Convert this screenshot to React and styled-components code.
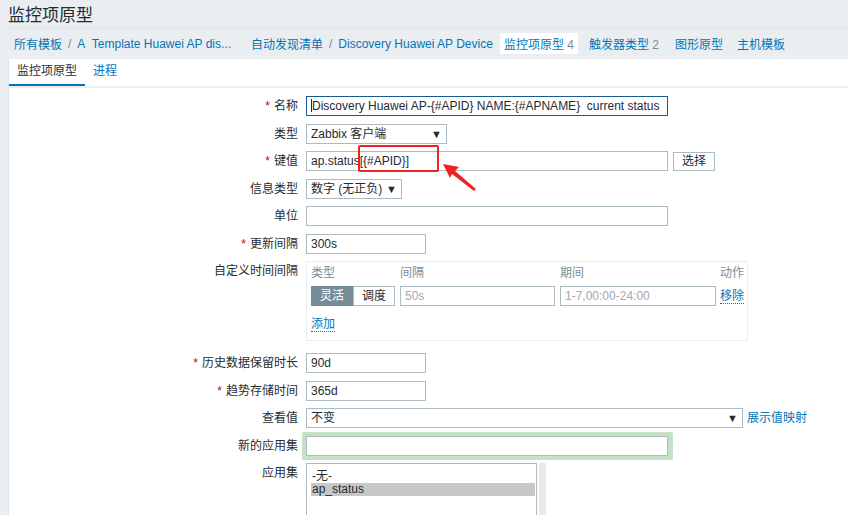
import styled, { createGlobalStyle } from 'styled-components'

const Global = createGlobalStyle`
  html, body { margin: 0; padding: 0; }
  body {
    background: #ebeef0;
    font-family: "Liberation Sans", Arial, "Noto Sans CJK SC", sans-serif;
    font-size: 12px;
    color: #1f2c33;
    overflow: hidden;
  }
`

const Page = styled.div`
  width: 848px;
  height: 515px;
  overflow: hidden;
`

const Header = styled.div`
  height: 27px;
  border-bottom: 1px solid #dfe4e7;
  margin-left: 8px;
  display: flex;
  align-items: center;
  h1 {
    margin: 0;
    font-size: 17px;
    font-weight: normal;
    color: #1f2c33;
    line-height: 27px;
    position: relative;
    top: 2px;
  }
`

const Crumbs = styled.div`
  display: flex;
  align-items: center;
  height: 31px;
  padding-left: 14px;
  white-space: nowrap;
`

const Crumb = styled.span`
  color: #0275b8;
  padding: ${p => (p.$active ? '2px 4px' : '2px 0')};
  background: ${p => (p.$active ? '#fff' : 'transparent')};
  margin-right: ${p => p.$gap || 0}px;
  em {
    font-style: normal;
    color: #768d99;
  }
`

const Sep = styled.span`
  color: #768d99;
  margin: 0 6px;
`

const Card = styled.div`
  background: #fff;
  margin-left: 8px;
  border-left: 1px solid #dfe4e7;
  height: 460px;
`

const Tabs = styled.div`
  display: flex;
  height: 27px;
  border-bottom: 2px solid #ebeef0;
`

const Tab = styled.div`
  padding: 0 8px;
  line-height: 25px;
  color: ${p => (p.$on ? '#1f2c33' : '#0275b8')};
  border-bottom: 2px solid ${p => (p.$on ? '#0275b8' : 'transparent')};
  margin-bottom: -2px;
  height: 25px;
  font-size: 12px;
`

const Form = styled.div`
  padding-top: 8px;
  display: flex;
  flex-direction: column;
  gap: 7.5px;
`

const Row = styled.div`
  display: flex;
  align-items: ${p => (p.$top ? 'flex-start' : 'center')};
  margin-top: ${p => p.$mt || 0}px;
  position: relative;
`

const Label = styled.div`
  width: 289px;
  text-align: right;
  padding-right: 8px;
  flex-shrink: 0;
  line-height: 20px;
  white-space: nowrap;
  padding-top: ${p => p.$pt || 0}px;
  span {
    color: #d40000;
    margin-right: 4px;
  }
`

const Input = styled.div`
  box-sizing: border-box;
  width: ${p => p.$w}px;
  height: 20px;
  border: 1px solid ${p => (p.$focus ? '#1a5b8e' : '#acbbc2')};
  padding: 0 4px;
  line-height: 18px;
  color: ${p => (p.$ph ? '#a3a9ad' : '#1f2c33')};
  white-space: nowrap;
  overflow: hidden;
  background: #fff;
  position: relative;
`

const Caret = styled.i`
  display: inline-block;
  width: 1px;
  height: 13px;
  background: #1f2c33;
  vertical-align: -2px;
`

const Select = styled(Input)`
  display: flex;
  justify-content: space-between;
  align-items: center;
  &::after {
    content: '▼';
    font-size: 11px;
    color: #1f2c33;
    margin-right: 0;
  }
`

const Button = styled.div`
  box-sizing: border-box;
  height: 19px;
  margin-left: 5px;
  padding: 0 8px;
  border: 1px solid #acbbc2;
  line-height: 17px;
  color: #1f2c33;
`

const IntervalBox = styled.div`
  box-sizing: border-box;
  width: 442px;
  height: 80px;
  border: 1px solid #ebeef0;
  padding: 4px 2px 0 4px;
`

const Grid = styled.div`
  display: grid;
  grid-template-columns: 89px 160px 160px 1fr;
  row-gap: 6px;
  align-items: center;
  white-space: nowrap;
`

const Head = styled.div`
  color: #768d99;
  line-height: 14px;
`

const Seg = styled.div`
  display: flex;
  height: 20px;
  box-sizing: border-box;
`

const SegBtn = styled.div`
  width: 42px;
  box-sizing: border-box;
  text-align: center;
  line-height: 18px;
  border: 1px solid ${p => (p.$on ? '#768d99' : '#acbbc2')};
  background: ${p => (p.$on ? '#768d99' : '#fff')};
  color: ${p => (p.$on ? '#fff' : '#1f2c33')};
`

const Link = styled.span`
  color: #0275b8;
  border-bottom: ${p => (p.$dotted ? '1px dotted #0275b8' : 'none')};
  line-height: 14px;
  margin-left: ${p => p.$ml || 0}px;
  white-space: nowrap;
`

const AddRow = styled.div`
  margin-top: 11px;
`

const Green = styled.div`
  background: #c6e2c6;
  padding: 4px 5px 4px 4px;
  margin-left: -4px;
  border-radius: 2px;
`

const ListWrap = styled.div`
  display: flex;
  height: 60px;
`

const List = styled.div`
  box-sizing: border-box;
  width: 231px;
  border: 1px solid #acbbc2;
  border-bottom: none;
  padding: 6px 1px 0 4px;
  line-height: 13px;
`

const Opt = styled.div`
  background: ${p => (p.$sel ? '#c8c8c8' : 'transparent')};
  padding-left: 1px;
`

const Scroll = styled.div`
  width: 7px;
  margin-left: 2px;
  background: #e9e9e9;
`

const Mark = styled.div`
  position: absolute;
  left: 349px;
  top: -6px;
  width: 81px;
  height: 27px;
  box-sizing: border-box;
  border: 2px solid #ee2222;
  border-radius: 2px;
`

const Arrow = styled.svg`
  position: absolute;
  left: 431px;
  top: 10px;
`

export default function App() {
  return (
    <Page>
      <Global />
      <Header>
        <h1>监控项原型</h1>
      </Header>
      <Crumbs>
        <Crumb>所有模板</Crumb>
        <Sep>/</Sep>
        <Crumb $gap={20}>A&nbsp; Template Huawei AP dis...</Crumb>
        <Crumb>自动发现清单</Crumb>
        <Sep>/</Sep>
        <Crumb $gap={7}>Discovery Huawei AP Device</Crumb>
        <Crumb $active $gap={11}>监控项原型 <em>4</em></Crumb>
        <Crumb $gap={16}>触发器类型 <em>2</em></Crumb>
        <Crumb $gap={14}>图形原型</Crumb>
        <Crumb>主机模板</Crumb>
      </Crumbs>
      <Card>
        <Tabs>
          <Tab $on>监控项原型</Tab>
          <Tab>进程</Tab>
        </Tabs>
        <Form>
          <Row>
            <Label><span>*</span>名称</Label>
            <Input $w={362} $focus><Caret />Discovery Huawei AP-{'{#APID}'} NAME:{'{#APNAME}'}&nbsp; current status</Input>
          </Row>
          <Row>
            <Label>类型</Label>
            <Select $w={141}>Zabbix 客户端</Select>
          </Row>
          <Row>
            <Label><span>*</span>键值</Label>
            <Input $w={362}>ap.status[{'{#APID}'}]</Input>
            <Button>选择</Button>
            <Mark />
            <Arrow width="40" height="32" viewBox="0 0 40 32">
              <polygon points="3,3 19,6 15,10 36,28 34,30 12,13 10,17" fill="#ee2222" />
            </Arrow>
          </Row>
          <Row>
            <Label>信息类型</Label>
            <Select $w={96}>数字 (无正负)</Select>
          </Row>
          <Row>
            <Label>单位</Label>
            <Input $w={362} />
          </Row>
          <Row>
            <Label><span>*</span>更新间隔</Label>
            <Input $w={120}>300s</Input>
          </Row>
          <Row $top>
            <Label $pt={0}>自定义时间间隔</Label>
            <IntervalBox>
              <Grid>
                <Head>类型</Head>
                <Head>间隔</Head>
                <Head>期间</Head>
                <Head>动作</Head>
                <Seg>
                  <SegBtn $on>灵活</SegBtn>
                  <SegBtn>调度</SegBtn>
                </Seg>
                <Input $w={155} $ph>50s</Input>
                <Input $w={156} $ph>1-7,00:00-24:00</Input>
                <div><Link $dotted>移除</Link></div>
              </Grid>
              <AddRow><Link $dotted>添加</Link></AddRow>
            </IntervalBox>
          </Row>
          <Row $mt={4.5}>
            <Label><span>*</span>历史数据保留时长</Label>
            <Input $w={120}>90d</Input>
          </Row>
          <Row>
            <Label><span>*</span>趋势存储时间</Label>
            <Input $w={120}>365d</Input>
          </Row>
          <Row>
            <Label>查看值</Label>
            <Select $w={437}>不变</Select>
            <Link $ml={4}>展示值映射</Link>
          </Row>
          <Row $mt={-3.5}>
            <Label>新的应用集</Label>
            <Green>
              <Input $w={362} />
            </Green>
          </Row>
          <Row $top $mt={-4.5}>
            <Label>应用集</Label>
            <ListWrap>
              <List>
                <Opt>-无-</Opt>
                <Opt $sel>ap_status</Opt>
              </List>
              <Scroll />
            </ListWrap>
          </Row>
        </Form>
      </Card>
    </Page>
  )
}
